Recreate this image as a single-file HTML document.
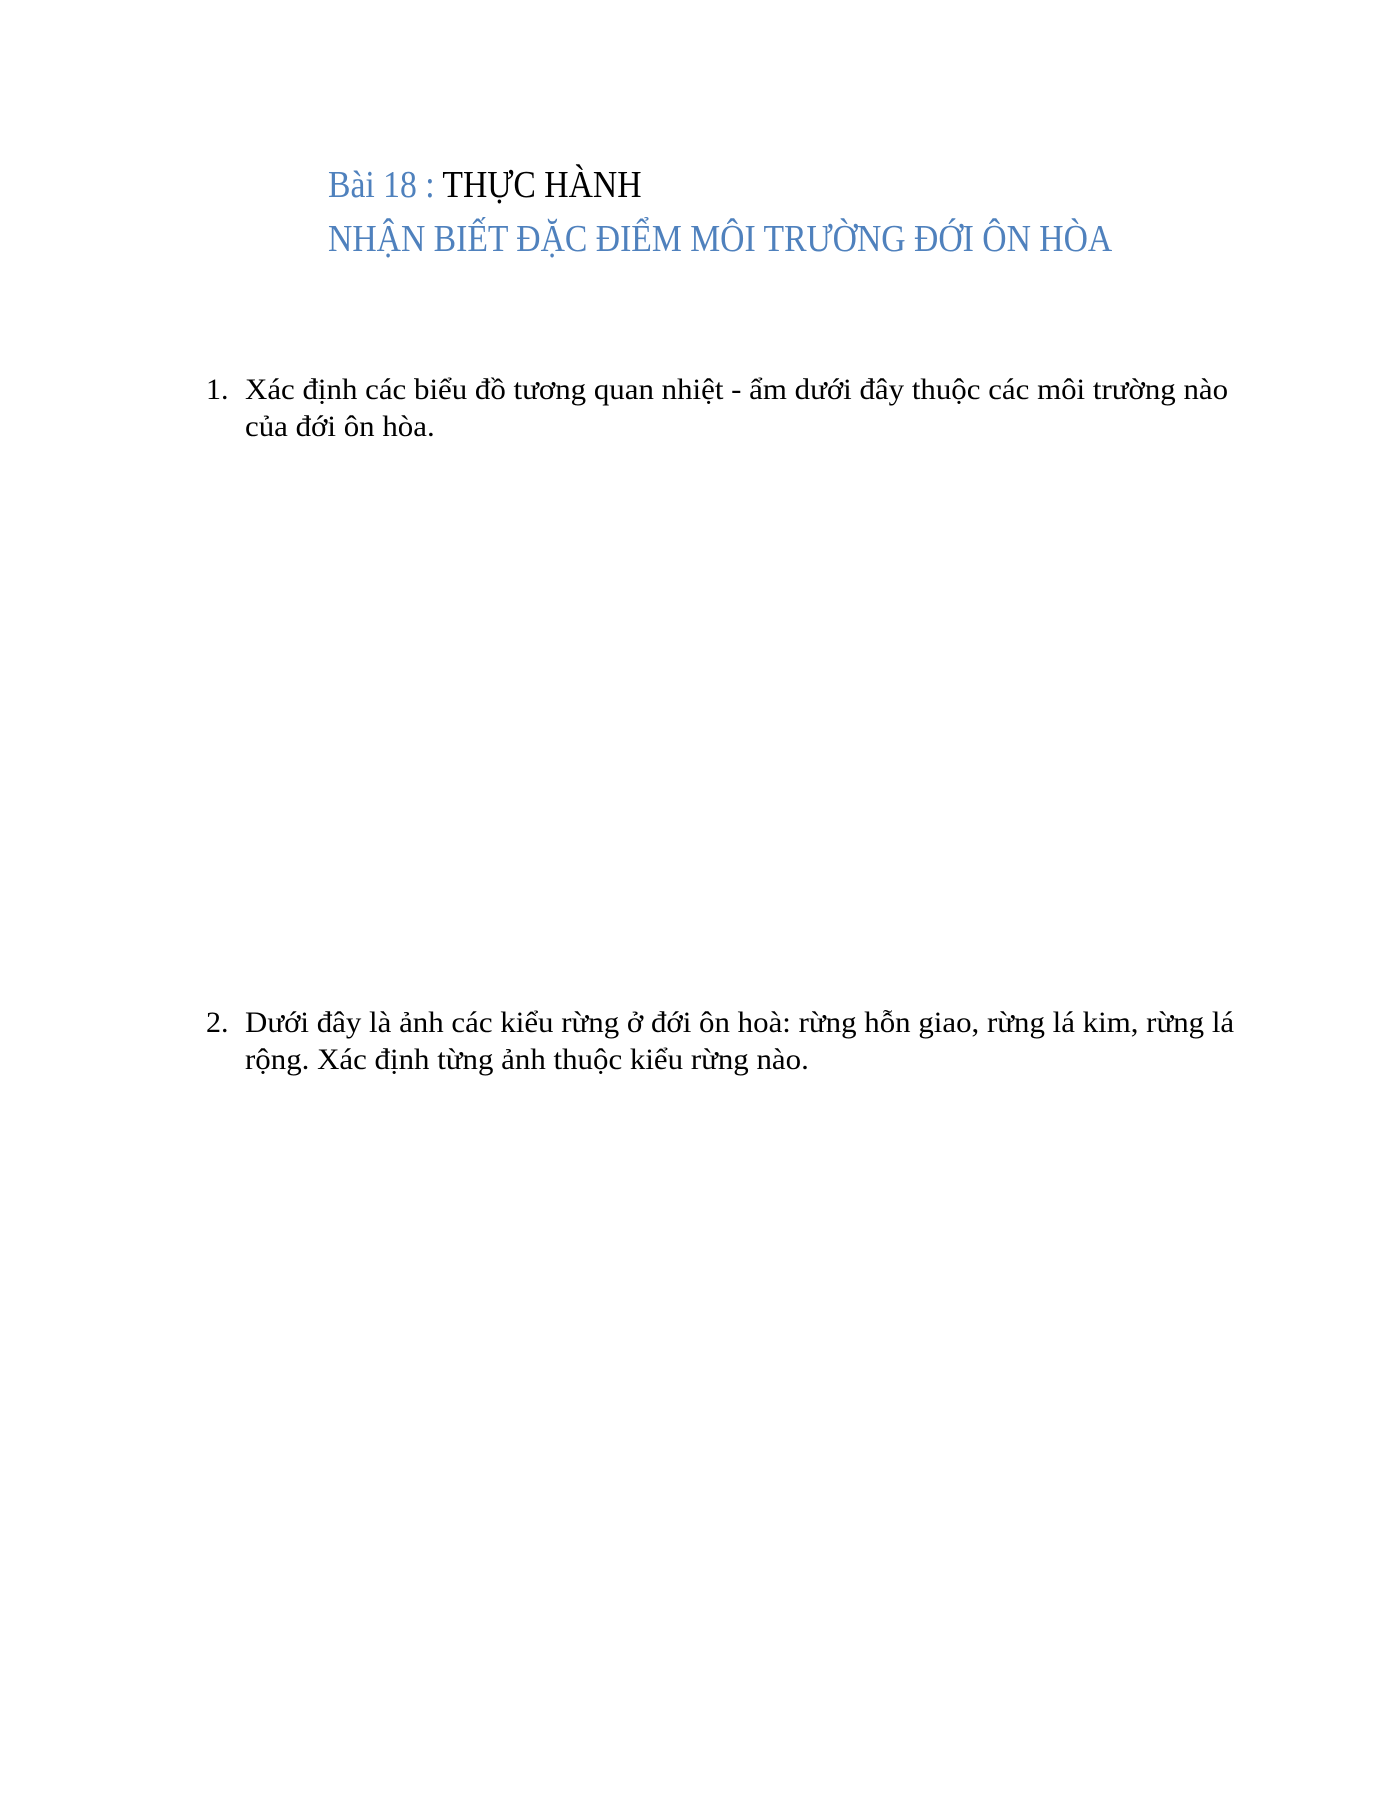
<!DOCTYPE html>
<html><head><meta charset="utf-8"><style>
body{margin:0;background:#fff;width:1390px;height:1800px;position:relative;overflow:hidden;font-family:"Liberation Serif",serif;}
.l{position:absolute;white-space:nowrap;transform-origin:0 0;}
.t{font-size:38px;color:#4f81bd;}
.b{font-size:30px;color:#000;}
</style></head><body>
<div class="l t" style="left:328px;top:163px;transform:scaleX(0.886)">Bài 18 : <span style="color:#000">THỰC HÀNH</span></div>
<div class="l t" style="left:328px;top:217px;transform:scaleX(0.886)">NHẬN BIẾT ĐẶC ĐIỂM MÔI TRƯỜNG ĐỚI ÔN HÒA</div>
<div class="l b" style="left:206px;top:373px">1.</div>
<div class="l b" style="left:245px;top:373px;transform:scaleX(1.03)">Xác định các biểu đồ tương quan nhiệt - ẩm dưới đây thuộc các môi trường nào</div>
<div class="l b" style="left:245px;top:410px;transform:scaleX(1.03)">của đới ôn hòa.</div>
<div class="l b" style="left:206px;top:1006px">2.</div>
<div class="l b" style="left:245px;top:1006px;transform:scaleX(1.03)">Dưới đây là ảnh các kiểu rừng ở đới ôn hoà: rừng hỗn giao, rừng lá kim, rừng lá</div>
<div class="l b" style="left:245px;top:1043px;transform:scaleX(1.03)">rộng. Xác định từng ảnh thuộc kiểu rừng nào.</div>
</body></html>
